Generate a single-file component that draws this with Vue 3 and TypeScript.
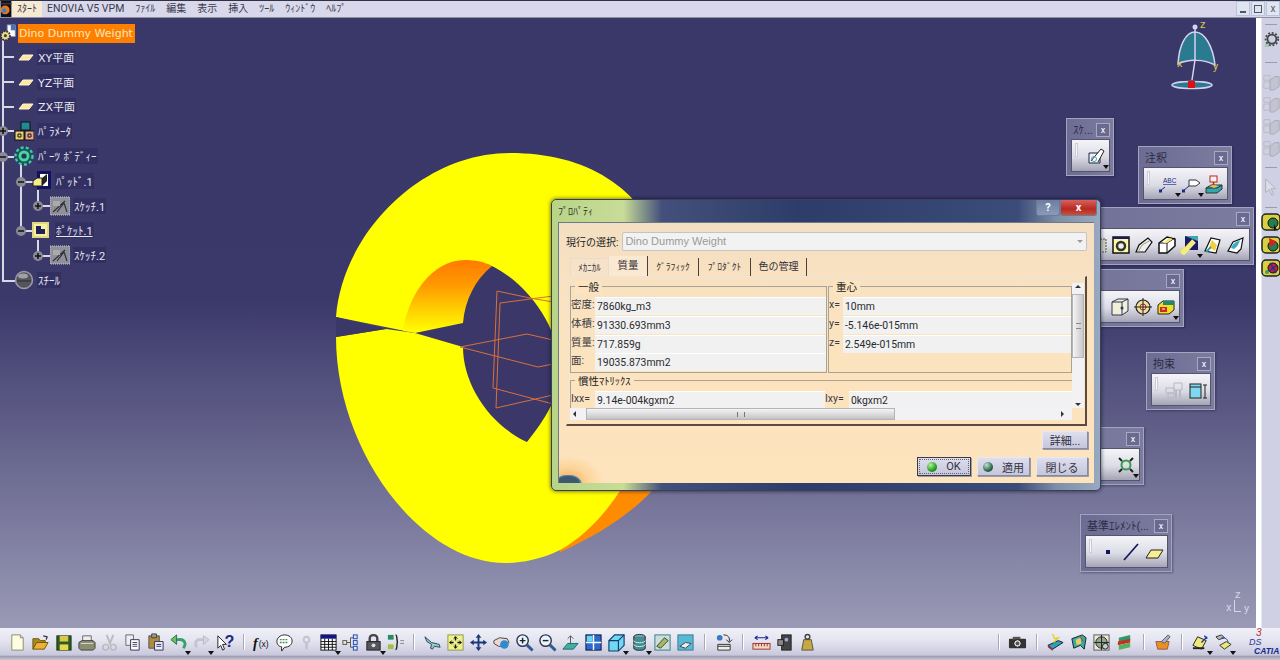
<script setup lang="ts">
const ic: Record<string, string> = {
  root: '<path d="M8 1h9v13H8z" fill="#fff" stroke="#88a"/><path d="M12 1h5v6h-5z" fill="#4a74b8"/><circle cx="6" cy="13" r="5" fill="#e8d890" stroke="#333" stroke-dasharray="2 1" stroke-width="2"/><circle cx="6" cy="13" r="1.6" fill="#333"/>',
  plane: '<path d="M5 13l4-5h10l-4 5z" fill="#ffe8a0" stroke="#fff6d8"/>',
  params: '<rect x="7" y="1" width="9" height="8" fill="#1d8a94" stroke="#111"/><rect x="1" y="10" width="9" height="9" fill="#e8d070" stroke="#111"/><rect x="11" y="10" width="9" height="9" fill="#e8a888" stroke="#111"/><path d="M4 13h3v3H4zM14 13h3v3h-3z" fill="none" stroke="#111"/>',
  gear: '<circle cx="10" cy="10" r="6.5" fill="#4fd0a0" stroke="#0d5c48" stroke-width="2"/><circle cx="10" cy="10" r="8.5" fill="none" stroke="#39c9b0" stroke-width="2.4" stroke-dasharray="3 2.2"/><circle cx="10" cy="10" r="2.6" fill="#1d3a5c"/>',
  pad: '<rect x="5" y="0" width="14" height="18" fill="#14105c"/><path d="M8 3h8v12H8z" fill="#fff"/><path d="M1 10l4-3h5v8H1z" fill="#f6ec90" stroke="#222"/><path d="M10 7l5-4v7l-5 5z" fill="#222"/>',
  pocket: '<rect x="1" y="3" width="15" height="14" fill="#f7f0a0" stroke="#e0d880" stroke-width="2"/><path d="M4 6h5v3h4v5H4z" fill="#22205c"/>',
  sketch: '<rect x="0" y="1" width="20" height="18" fill="#8e8e9c" stroke="#ccc" stroke-dasharray="1 1"/><path d="M3 16L15 5M7 16l7-9 3 9" fill="none" stroke="#333" stroke-width="1.2"/><path d="M3 5h7v5H3z" fill="#aaa"/>',
  steel: '<circle cx="10" cy="10" r="8.5" fill="#55555f" stroke="#9a9aa6" stroke-width="1.5"/><ellipse cx="9" cy="6" rx="5" ry="2.5" fill="#a0a0a8"/><path d="M3 11h14" stroke="#2a2a30"/>',

  new: '<path d="M4 2h9l3 3v13H4z" fill="#fffde0" stroke="#8a8a70"/><path d="M13 2v3h3" fill="#ddd" stroke="#8a8a70"/>',
  open: '<path d="M2 17V6h6l2 2h5v3" fill="#a88a20" stroke="#6a5510"/><path d="M2 17l4-7h12l-4 7z" fill="#f0b030" stroke="#6a5510"/><path d="M13 3l4 1-1 3" fill="none" stroke="#222" stroke-width="1.2"/>',
  save: '<rect x="3" y="3" width="15" height="15" fill="#2f5a22" stroke="#1b3a14"/><rect x="6" y="3" width="9" height="6" fill="#d8c850"/><rect x="6" y="12" width="9" height="6" fill="#e8d850"/>',
  print: '<path d="M6 3h9v6H6z" fill="#eee" stroke="#666"/><path d="M2 10l3-2h12l2 2v6l-2 2H4l-2-2z" fill="#8a8d70" stroke="#444"/><path d="M4 11h13" stroke="#ddd"/>',
  cut: '<path d="M7 2l4 10M14 2l-4 10" stroke="#bbb" stroke-width="2"/><circle cx="6" cy="15" r="3" fill="none" stroke="#b8b8c0" stroke-width="1.5"/><circle cx="14" cy="15" r="3" fill="none" stroke="#b8b8c0" stroke-width="1.5"/>',
  copy: '<path d="M3 2h8v11H3z" fill="#eee" stroke="#667"/><path d="M8 7h9v11H8z" fill="#fff" stroke="#335"/><path d="M10 10h5M10 12h5M10 14h5" stroke="#446"/>',
  paste: '<path d="M3 3h11v13H3z" fill="#b08a40" stroke="#554"/><path d="M6 1h5v4H6z" fill="#999" stroke="#444"/><path d="M9 9h9v9H9z" fill="#eef" stroke="#335"/><path d="M11 12h5M11 14h5" stroke="#335"/>',
  undo: '<path d="M15 16c4-5 1-10-5-9H6" fill="none" stroke="#35a070" stroke-width="3"/><path d="M8 2L2 7l6 5z" fill="#68c060" stroke="#2a7050"/>',
  redo: '<path d="M5 15c-3-5 0-9 5-8h4" fill="none" stroke="#c5c5d0" stroke-width="3"/><path d="M12 3l6 4-6 5z" fill="#d5d5e0" stroke="#b8b8c8"/>',
  what: '<path d="M3 3v13l3-3 2 5 2-1-2-5h4z" fill="#fff" stroke="#222"/><text x="10" y="15" font-size="17" font-weight="700" fill="#1b2a88" font-family="Liberation Sans">?</text>',
  fx: '<text x="0" y="16" font-size="15" font-family="Liberation Serif" font-style="italic" font-weight="700" fill="#111">f</text><text x="6" y="15" font-size="9" font-family="Liberation Sans" fill="#111">(x)</text>',
  bubble: '<path d="M10 2c5 0 8 3 8 6.5S15 15 10 15l-3 4v-4.500C3 14 2 11 2 8.500S5 2 10 2z" fill="#fff" stroke="#222"/><path d="M5 7h9M5 10h9" stroke="#4a8a50" stroke-dasharray="2 1" stroke-width="1.500"/>',
  faint: '<circle cx="10" cy="7" r="3" fill="none" stroke="#c4c4d0" stroke-width="2"/><path d="M10 10v7" stroke="#c4c4d0" stroke-width="3"/>',
  table: '<rect x="2" y="2" width="16" height="16" fill="#fff" stroke="#111"/><rect x="2" y="2" width="16" height="4" fill="#14148a"/><path d="M2 9h16M2 12h16M2 15h16M6 6v12M10 6v12M14 6v12" stroke="#111"/>',
  tree: '<path d="M5 10h5M10 5v10M10 5h3M10 15h3" stroke="#555" fill="none"/><rect x="2" y="8" width="4" height="4" fill="#f0e8c0" stroke="#555"/><rect x="13" y="2" width="4" height="4" fill="#d8e8ff" stroke="#2244aa"/><rect x="13" y="8" width="4" height="4" fill="#d8e8ff" stroke="#2244aa"/><rect x="13" y="14" width="4" height="4" fill="#d8e8ff" stroke="#2244aa"/>',
  lock: '<path d="M6 9V6c0-5 8-5 8 0v3" fill="none" stroke="#444" stroke-width="2.500"/><rect x="3" y="9" width="14" height="9" fill="#55555f" stroke="#222"/><circle cx="10" cy="13" r="2" fill="#ddd"/>',
  formula: '<rect x="2" y="2" width="6" height="5" fill="#2a8a60"/><rect x="2" y="12" width="6" height="5" fill="#a0c040"/><path d="M10 2c2 0 1 3 2 7.500-1 4.500 0 8-2 8" fill="none" stroke="#222" stroke-width="1.500"/><path d="M15 8h4M15 11h4" stroke="#888"/>',
  fly: '<path d="M2 4l7 6 8 2 1 3-6-1-2 3-2-1 1-4-5-3z" fill="#9fc8c0" stroke="#1f4a66"/>',
  fit: '<rect x="2" y="2" width="16" height="16" fill="#eef08a" stroke="#8a9a50"/><path d="M10 4v4M10 16v-4M4 10h4M16 10h-4" stroke="#111" stroke-width="1.500"/><path d="M8 6l2-2 2 2M8 14l2 2 2-2M6 8l-2 2 2 2M14 8l2 2-2 2" fill="none" stroke="#111"/>',
  pan: '<path d="M10 1l3 4h-2v4h4V7l4 3-4 3v-2h-4v4h2l-3 4-3-4h2v-4H5v2l-4-3 4-3v2h4V5H7z" fill="#1d3a78"/>',
  rot: '<path d="M2 8l6-3 8 1 2 4-5 4H7l-5-3z" fill="#f0d8d0" stroke="#444"/><circle cx="13" cy="12" r="4.500" fill="#2f8ad0"/>',
  zin: '<circle cx="8" cy="8" r="6" fill="#e8f6ff" stroke="#335" stroke-width="1.500"/><path d="M5 8h6M8 5v6" stroke="#222" stroke-width="1.500"/><path d="M12.500 12.500l6 6" stroke="#2a5a90" stroke-width="3"/>',
  zout: '<circle cx="8" cy="8" r="6" fill="#e8f6ff" stroke="#335" stroke-width="1.500"/><path d="M5 8h6" stroke="#222" stroke-width="1.500"/><path d="M12.500 12.500l6 6" stroke="#2a5a90" stroke-width="3"/>',
  normal: '<path d="M2 17l5-6h11l-5 6z" fill="#40b0a0" stroke="#1f6a70"/><path d="M10 12V3M7 6l3-3 3 3" fill="none" stroke="#555"/>',
  quad: '<rect x="2" y="2" width="16" height="16" fill="#2a6ad0" stroke="#113"/><path d="M2 10h16M10 2v16" stroke="#fff" stroke-width="1.500"/><path d="M3 3h6v6H3z" fill="#68d8f0"/>',
  cube: '<path d="M2 8l6-6h10v11l-6 6H2z" fill="#70d8f0" stroke="#113a70" stroke-width="1.200"/><path d="M2 8h10v11M12 8l6-6" fill="none" stroke="#113a70" stroke-width="1.200"/>',
  cyl: '<ellipse cx="10" cy="4" rx="6" ry="2.500" fill="#6ab0b0" stroke="#223"/><path d="M4 4v12c0 3 12 3 12 0V4" fill="#4a8a90" stroke="#223"/><path d="M4 8c0 3 12 3 12 0M4 12c0 3 12 3 12 0" fill="none" stroke="#bfe"/>',
  shade1: '<rect x="2" y="2" width="16" height="16" fill="#c8e0d8" stroke="#3a7a8a"/><path d="M4 14l8-9 4 3-8 8z" fill="#a8b860" stroke="#444"/>',
  shade2: '<rect x="2" y="2" width="16" height="16" fill="#58b8d8" stroke="#3a7a8a"/><path d="M4 14l6-4 6 1-6 5z" fill="#eee" stroke="#444"/>',
  swap: '<circle cx="6" cy="5" r="3" fill="#3a7ac0"/><path d="M10 2c5 0 7 3 6 7M13 7l3 3 3-3" fill="none" stroke="#222"/><path d="M4 12h13v6H4z" fill="#eee" stroke="#333"/><path d="M4 14h13" stroke="#333"/>',
  measure: '<path d="M3 5h14M3 5l3-2M3 5l3 2M17 5l-3-2M17 5l-3 2" fill="none" stroke="#1b2a88" stroke-width="1.200"/><rect x="1" y="11" width="18" height="6" fill="#f0d8c0" stroke="#a03030"/><path d="M4 11v3M7 11v3M10 11v3M13 11v3M16 11v3" stroke="#a03030"/>',
  inertia: '<rect x="7" y="2" width="10" height="16" fill="#444" stroke="#222"/><rect x="3" y="7" width="6" height="6" fill="#888" stroke="#222"/><circle cx="12" cy="7" r="2" fill="#9ad"/>',
  weight: '<path d="M6 7h8l2 11H4z" fill="#c8a840" stroke="#554"/><circle cx="10" cy="4" r="2.500" fill="none" stroke="#444" stroke-width="1.500"/>',
  camera: '<rect x="1" y="6" width="18" height="10" rx="1" fill="#333"/><rect x="5" y="4" width="8" height="3" fill="#555"/><circle cx="10" cy="11" r="4" fill="#ddd" stroke="#111"/><circle cx="10" cy="11" r="2" fill="#555"/>',
  ren1: '<path d="M2 13l11-5 5 2-11 7z" fill="#30a0b8" stroke="#123"/><path d="M2 13l5 4v2l-5-4z" fill="#c02030"/><path d="M7 1l2 5 4-1-5 5" fill="none" stroke="#e8d020" stroke-width="1.500"/>',
  ren2: '<path d="M3 6l11-4 4 3-2 12-4-4-7 3z" fill="#40a8a0" stroke="#123"/><path d="M7 7l5-2 1 6-5 2z" fill="#e8d060"/><path d="M12 4l3 5" stroke="#c03030"/>',
  ren3: '<rect x="2" y="2" width="16" height="16" fill="#efe8d0" stroke="#556"/><circle cx="10" cy="10" r="6" fill="#90a890" stroke="#222"/><path d="M10 2v16M2 10h16" stroke="#222"/><circle cx="14" cy="14" r="3" fill="#ccc" stroke="#222"/>',
  ren4: '<path d="M4 5l12-3v5L4 10z" fill="#2a9a70"/><path d="M3 9l13-3v4L3 13z" fill="#c83020"/><path d="M4 13l12-3v5L4 18z" fill="#5ab060"/>',
  bowl: '<path d="M3 9h14l-2 8H5z" fill="#e89020" stroke="#955"/><path d="M9 9l7-7 2 2-6 7z" fill="#a8b8c8" stroke="#556"/>',
  appl1: '<path d="M2 13l5-9 9 4-5 9z" fill="#f0e878" stroke="#222"/><path d="M11 10l6-6M14 3l3 3" stroke="#2040a0" stroke-width="1.500"/><path d="M2 16h12" stroke="#222" stroke-width="2"/>',
  appl2: '<path d="M6 13l7-4 5 3-7 5z" fill="#e8e870" stroke="#333"/><path d="M2 4l6-2 3 3-6 2z" fill="#bbb" stroke="#333"/><path d="M8 5c4 0 6 1 7 5" fill="none" stroke="#2040a0"/>',

  gearg: '<path d="M2 17L9 9l-1 9z" fill="#9ec8b8"/><circle cx="11" cy="9" r="5" fill="none" stroke="#444" stroke-width="2"/><circle cx="11" cy="9" r="7" fill="none" stroke="#444" stroke-width="2" stroke-dasharray="2 2"/>',
  gr: '<path d="M2 3h7v5H2zM2 10h7v7H2z" fill="none" stroke="#b8b8c4"/><path d="M9 8l5-4h5v11l-6 4H9z" fill="#c4c4d0" stroke="#a8a8b8"/>',
  cursor: '<path d="M4 1v15l4-3 3 6 2-1-3-6h5z" fill="#ddddea" stroke="#aaaabc"/>',
  mod1: '<rect x="1" y="2" width="18" height="16" rx="4" fill="#d8d040" stroke="#222" stroke-width="1.500"/><circle cx="12" cy="11" r="5" fill="#2a7a50" stroke="#111"/><path d="M13 12v7l2-2 2 3" fill="#111"/>',
  mod2: '<rect x="1" y="2" width="18" height="16" rx="4" fill="#d8d040" stroke="#222" stroke-width="1.500"/><circle cx="12" cy="11" r="5" fill="#2a7a50" stroke="#111"/><path d="M8 3l8 4-7 5z" fill="#d82020"/>',
  mod3: '<rect x="1" y="2" width="18" height="16" rx="4" fill="#d8d040" stroke="#222" stroke-width="1.500"/><circle cx="12" cy="10" r="5" fill="#c82030" stroke="#111"/><path d="M7 14l9-7M9 5l6 10" stroke="#2030a0" stroke-width="1.500"/><circle cx="6" cy="14" r="2" fill="#3aa060"/>',

  sk: '<path d="M3 7h11v10H3z" fill="#eef" stroke="#224"/><path d="M5 15L15 3l3 2-6 11" fill="#fff" stroke="#222"/><circle cx="8" cy="13" r="2.500" fill="none" stroke="#4aa"/>',
  abc: '<text x="5" y="9" font-size="6.500" font-family="Liberation Sans" fill="#1b2a88" text-decoration="underline">ABC</text><path d="M2 17l5-4" stroke="#1b2a88"/><rect x="1" y="15.500" width="3" height="3" fill="#1b2a88"/>',
  flag: '<path d="M8 6h7l4 3-4 3H8z" fill="#fff" stroke="#334"/><path d="M2 17l6-5" stroke="#1b2a88"/><rect x="1" y="15.500" width="3" height="3" fill="#1b2a88"/>',
  pin: '<path d="M2 14l5-3h11v4l-5 4H2z" fill="#2fa8b0" stroke="#333"/><path d="M2 14h11l5-3" fill="none" stroke="#333"/><rect x="6" y="2" width="7" height="6" fill="#fff0e8" stroke="#c02020"/><path d="M9.500 8v5" stroke="#c02020" stroke-width="1.500"/><path d="M5 12l5-1 5 1-5 2z" fill="#e8c840"/>',
  half: '<rect x="6" y="4" width="12" height="13" fill="#d0d0c0" stroke="#555" stroke-dasharray="2 1"/>',
  ring: '<rect x="2" y="2" width="16" height="16" fill="#fdf8a8" stroke="#111" stroke-width="1.500"/><rect x="2" y="2" width="16" height="2" fill="#1a1866"/><circle cx="10" cy="11" r="4" fill="#eee" stroke="#333" stroke-width="2.500"/>',
  sw1: '<path d="M2 17l3-7 9-7 4 4-7 10z" fill="#eee" stroke="#111" stroke-width="1.200"/><path d="M4 17l4-7 7-4" fill="none" stroke="#a8a070"/>',
  sw2: '<path d="M2 8l8-6 8 2v7l-8 7H2z" fill="#fff" stroke="#111" stroke-width="1.500"/><path d="M2 8h8v10M10 8l8-5" fill="none" stroke="#111"/><path d="M6 8l6-5 4 1-6 4z" fill="#f4e870"/>',
  sw3: '<path d="M2 18L13 5" stroke="#e8e070" stroke-width="6"/><rect x="5" y="1" width="13" height="14" fill="#1a1a66"/><path d="M5 1h13v5z" fill="#40a8b0"/><path d="M2 19l12-13" stroke="#f4ec80" stroke-width="5"/>',
  sw4: '<path d="M2 16L8 3l9 2-4 13z" fill="#fff" stroke="#111" stroke-width="1.200"/><path d="M6 12L9 5l5 5-2 6z" fill="#f0d040"/><path d="M3 17l5-5" stroke="#30a0a0" stroke-width="2"/>',
  sw5: '<path d="M2 16l5-9 10-4-2 11-4 4z" fill="#fff" stroke="#111" stroke-width="1.200"/><path d="M5 13c2-5 5-6 9-8-1 4-3 7-6 9z" fill="#38b0c0"/>',
  box3: '<path d="M2 5l6-3h10v12l-6 4H2z" fill="#f0f0d8" stroke="#335"/><path d="M2 5h10v13M12 5l6-3" fill="none" stroke="#335"/><circle cx="12" cy="11" r="1.500" fill="#335"/>',
  tgt: '<circle cx="10" cy="10" r="7" fill="#f0e0a0" stroke="#222" stroke-width="1.200"/><circle cx="10" cy="10" r="3" fill="none" stroke="#b03030"/><path d="M10 1v18M1 10h18" stroke="#222"/>',
  mold: '<path d="M2 8l5-4h11v9l-5 4H2z" fill="#f0e020" stroke="#222"/><path d="M7 4h11v4H7z" fill="#1f8a70"/><path d="M4 10h7v5H4z" fill="#d02820"/><path d="M6 12h3" stroke="#fff"/>',
  sel: '<circle cx="10" cy="10" r="4.500" fill="none" stroke="#3a9a50" stroke-width="2"/><path d="M3 3l3 3M17 3l-3 3M3 17l3-3M17 17l-3-3" stroke="#222" stroke-width="2"/>',
  f1: '<path d="M2 8h8v5H2zM4 13h6v5H4zM10 3h8v7h-8z" fill="none" stroke="#b8b8c4"/><path d="M12 10v8M16 10v8" stroke="#b8b8c4" stroke-width="2"/>',
  cybox: '<rect x="3" y="4" width="11" height="14" fill="#80d8f0" stroke="#222"/><path d="M3 7h11" stroke="#222"/><path d="M18 5v13M16 5h4M16 18h4" stroke="#222"/>',
  pt: '<rect x="8" y="8" width="4" height="4" fill="#14145c"/>',
  line: '<path d="M3 18L17 2" stroke="#14145c" stroke-width="1.600"/>',
  pl: '<path d="M2 16l5-8h12l-5 8z" fill="#f8f090" stroke="#222"/>',
}

const groups: string[][] = [
  ['new', 'open', 'save', 'print', 'cut', 'copy', 'paste', '!undo', '!redo', 'what'],
  ['fx', 'bubble', 'faint', '!table', 'tree', '!lock', 'formula'],
  ['fly', 'fit', 'pan', 'rot', 'zin', 'zout', 'normal', 'quad', '!cube', '!cyl', 'shade1', 'shade2'],
  ['swap'],
  ['measure', 'inertia', 'weight'],
]
const groupsRight: string[][] = [['camera'], ['ren1', 'ren2', 'ren3', 'ren4'], ['bowl'], ['!appl1', '!appl2']]

const tree = [
  { d: 1, i: 'plane', t: 'XY平面' },
  { d: 1, i: 'plane', t: 'YZ平面' },
  { d: 1, i: 'plane', t: 'ZX平面' },
  { d: 1, i: 'params', t: 'ﾊﾟﾗﾒｰﾀ' },
  { d: 1, i: 'gear', t: 'ﾊﾟｰﾂ ﾎﾞﾃﾞｨｰ' },
  { d: 2, i: 'pad', t: 'ﾊﾟｯﾄﾞ.1' },
  { d: 3, i: 'sketch', t: 'ｽｹｯﾁ.1' },
  { d: 2, i: 'pocket', t: 'ﾎﾟｹｯﾄ.1', u: true },
  { d: 3, i: 'sketch', t: 'ｽｹｯﾁ.2' },
  { d: 1, i: 'steel', t: 'ｽﾁｰﾙ' },
]

const floats = [
  { x: 1066, y: 118, w: 48, title: 'ｽｹ...', icons: ['!sk'] },
  { x: 1138, y: 146, w: 94, title: '注釈', icons: ['!abc', '!flag', 'pin'] },
  { x: 1000, y: 207, w: 254, title: '', icons: ['half', 'ring', 'sw1', 'sw2', '!sw3', 'sw4', 'sw5'] },
  { x: 1000, y: 269, w: 184, title: '', icons: ['box3', 'tgt', '!mold'] },
  { x: 1146, y: 352, w: 69, title: '拘束', icons: ['f1', 'cybox'] },
  { x: 1000, y: 427, w: 144, title: '', icons: ['!sel'] },
  { x: 1080, y: 514, w: 92, title: '基準ｴﾚﾒﾝﾄ(...', icons: ['pt', 'line', 'pl'] },
]

const left = [
  { k: '密度:', v: '7860kg_m3' },
  { k: '体積:', v: '91330.693mm3' },
  { k: '質量:', v: '717.859g' },
  { k: '面:', v: '19035.873mm2' },
]
const cog = [
  { k: 'x=', v: '10mm' },
  { k: 'y=', v: '-5.146e-015mm' },
  { k: 'z=', v: '2.549e-015mm' },
]
const tabs = ['ﾒｶﾆｶﾙ', '質量', 'ｸﾞﾗﾌｨｯｸ', 'ﾌﾟﾛﾀﾞｸﾄ', '色の管理']
const menu = ['ﾌｧｲﾙ', '編集', '表示', '挿入', 'ﾂｰﾙ', 'ｳｨﾝﾄﾞｳ', 'ﾍﾙﾌﾟ']
const name = (s: string) => s.replace('!', '')
const hasDrop = (s: string) => s.startsWith('!')
</script>

<template>
  <div class="app">
    <div class="menubar">
      <svg class="logo" viewBox="0 0 12 18"><rect width="12" height="18" fill="#111" /><circle cx="5" cy="10" r="5" fill="#e87820" /><circle cx="4" cy="11" r="2.500" fill="#3a80c8" /><path d="M0 2h12v2H0z" fill="#334" /></svg>
      <span class="start">ｽﾀｰﾄ</span>
      <nav class="menu">
        <span class="en">ENOVIA V5 VPM</span>
        <span v-for="m in menu" :key="m">{{ m }}</span>
      </nav>
      <div class="winbtns">
        <span><i class="b-min"></i></span>
        <span><i class="b-res"></i></span>
        <span class="x">x</span>
      </div>
    </div>

    <div class="middle">
      <div class="view">
        <svg class="part" viewBox="0 18 1256 610">
          <defs>
            <linearGradient id="inner" x1="0" y1="0" x2="0" y2="1">
              <stop offset="0" stop-color="#ff7a00" />
              <stop offset="0.35" stop-color="#ff9a00" />
              <stop offset="1" stop-color="#ffff00" />
            </linearGradient>
          </defs>
          <path d="M560 552C610 530 650 500 668 470L640 440 560 520z" fill="#ff8c00" />
          <path d="M336 317C342 235 420 153 510 153 590 153 650 190 670 270L660 400C640 470 605 525 560 550 540 560 520 563 505 563 420 563 336 450 336 337L386 329 415 333z" fill="#ffff00" />
          <path d="M403 331C408 295 432 260 465 260 475 260 485 262 492 266L463 330 415 332z" fill="url(#inner)" />
          <path d="M492 266C530 285 560 330 560 370 560 395 545 420 527 442 490 425 463 385 463 347L415 333 463 323C465 300 475 280 492 266z" fill="#3b3869" />
          <path d="M336 317L386 329 336 337z" fill="#3b3869" />
          <g fill="none" stroke="#d8703a" stroke-width="1">
            <path d="M497 291L530 298 553 302M500 303L553 296M497 291L493 388 553 404M500 303L496 408 553 395M460 347L527 334 553 340M460 347L538 367 553 364" />
          </g>
        </svg>

        <div class="tree">
          <svg class="lines" viewBox="0 18 140 280">
            <g stroke="#d8d8e4" stroke-width="2" fill="none">
              <path d="M3 40V281H15M3 57H14M3 82H14M3 107H14M3 131H14M3 157H14M21 165V231H33M21 182H33M38 190V206H50M38 240V256H50" />
            </g>
            <g v-for="e in [[3,131,1],[3,157,0],[21,182,0],[21,231,0],[38,206,1],[38,256,1]]" :key="e[1]">
              <circle :cx="e[0]" :cy="e[1]" r="5" fill="#8a8a96" />
              <path :d="`M${e[0] - 3} ${e[1]}h6` + (e[2] ? `M${e[0]} ${e[1] - 3}v6` : '')" stroke="#111" stroke-width="1.500" />
            </g>
          </svg>
          <div class="row d0">
            <svg class="ti" viewBox="0 0 20 20" v-html="ic.root"></svg>
            <span class="sel">Dino Dummy Weight</span>
          </div>
          <div v-for="r in tree" :key="r.t + r.d" class="row" :class="'d' + r.d">
            <svg class="ti" viewBox="0 0 20 20" v-html="ic[r.i]"></svg>
            <span class="lbl" :class="{ under: r.u }">{{ r.t }}</span>
          </div>
        </div>

        <svg class="compass" viewBox="0 -6 60 86">
          <path d="M8 44C9 25 16 12 25 12 35 12 43 27 45 45 34 39 18 39 8 44z" fill="#2a7a90" stroke="#d8d0f0" stroke-width="1.500" />
          <path d="M25 6V40L22 60" stroke="#d8d0f0" stroke-width="1.500" fill="none" />
          <circle cx="25" cy="7" r="2.500" fill="#d8d0f0" />
          <ellipse cx="22" cy="65" rx="20" ry="3.500" fill="#2a7a90" stroke="#d8d0f0" stroke-width="1.500" />
          <rect x="18" y="61" width="7" height="7" fill="#e01010" />
          <text x="30" y="8" class="ax">z</text>
          <text x="7" y="47" class="ax">x</text>
          <text x="43" y="50" class="ax">y</text>
        </svg>
        <div class="axes"><span class="az">z</span><span class="ax2">x</span><span class="ay">y</span><i class="al"></i></div>

        <div
          v-for="f in floats"
          :key="f.x + '-' + f.y"
          class="float"
          :style="{ left: f.x + 'px', top: f.y - 18 + 'px', width: f.w + 'px' }"
        >
          <div class="ft"><span class="ftt">{{ f.title }}</span><span class="close">x</span></div>
          <div class="fb">
            <i class="grip"></i>
            <span v-for="n in f.icons" :key="n" class="fi" :class="{ drop: hasDrop(n) }">
              <svg viewBox="0 0 20 20" v-html="ic[name(n)]"></svg>
            </span>
          </div>
        </div>

        <div class="dlg">
          <div class="dtitle">
            <span class="dname">ﾌﾟﾛﾊﾟﾃｨ</span>
            <div class="dbtns"><span class="help">?</span><span class="cls">x</span></div>
          </div>
          <div class="panel">
            <div class="selrow">
              <span>現行の選択:</span>
              <div class="combo">Dino Dummy Weight<i class="arrow"></i></div>
            </div>
            <div class="tabs">
              <span v-for="(t, i) in tabs" :key="t" class="tab" :class="['t' + i, { on: i === 1 }]">{{ t }}</span>
            </div>
            <div class="sheet">
              <div class="scrollarea">
                <div class="content">
                  <div class="groups">
                    <div class="grp g1">
                      <span class="lg">一般</span>
                      <div v-for="x in left" :key="x.k" class="kv k1"><span class="k">{{ x.k }}</span><span class="v">{{ x.v }}</span></div>
                    </div>
                    <div class="grp g2">
                      <span class="lg">重心</span>
                      <div v-for="x in cog" :key="x.k" class="kv k2"><span class="k">{{ x.k }}</span><span class="v">{{ x.v }}</span></div>
                    </div>
                  </div>
                  <div class="grp g3">
                    <span class="lg">慣性ﾏﾄﾘｯｸｽ</span>
                    <div class="kv k3">
                      <span class="k">Ixx=</span><span class="v">9.14e-004kgxm2</span>
                      <span class="k k4">Ixy=</span><span class="v">0kgxm2</span>
                    </div>
                  </div>
                </div>
                <div class="vbar">
                  <span class="tri up"></span>
                  <div class="vthumb"><i></i></div>
                  <span class="tri dn"></span>
                </div>
              </div>
              <div class="hbar">
                <span class="tri lf"></span>
                <div class="hthumb"><i></i></div>
                <span class="tri rt"></span>
              </div>
            </div>
            <div class="detail"><button class="btn">詳細...</button></div>
            <div class="actions">
              <button class="btn ok"><i class="dot green"></i>OK</button>
              <button class="btn ap"><i class="dot dark"></i>適用</button>
              <button class="btn cl">閉じる</button>
            </div>
            <div class="glow"></div>
          </div>
        </div>
      </div>

      <aside class="side">
        <i class="sep"></i>
        <svg viewBox="0 0 20 20" v-html="ic.gearg"></svg>
        <i class="sep wide first"></i>
        <svg class="g" viewBox="0 0 20 20" v-html="ic.gr"></svg>
        <svg class="g" viewBox="0 0 20 20" v-html="ic.gr"></svg>
        <svg class="g" viewBox="0 0 20 20" v-html="ic.gr"></svg>
        <svg class="g" viewBox="0 0 20 20" v-html="ic.gr"></svg>
        <i class="sep wide"></i>
        <svg viewBox="0 0 20 20" v-html="ic.cursor"></svg>
        <i class="sep last"></i>
        <svg class="m" viewBox="0 0 20 20" v-html="ic.mod1"></svg>
        <svg class="m" viewBox="0 0 20 20" v-html="ic.mod2"></svg>
        <svg class="m" viewBox="0 0 20 20" v-html="ic.mod3"></svg>
      </aside>
    </div>

    <div class="bottom">
      <template v-for="(g, gi) in groups" :key="gi">
        <i v-if="gi > 0" class="vsep"></i>
        <span v-for="n in g" :key="n" class="bi" :class="{ drop: hasDrop(n), tight: gi === 1 }">
          <svg viewBox="0 0 20 20" v-html="ic[name(n)]"></svg>
        </span>
      </template>
      <span class="spacer"></span>
      <template v-for="(g, gi) in groupsRight" :key="'r' + gi">
        <i class="vsep"></i>
        <span v-for="n in g" :key="n" class="bi" :class="{ drop: hasDrop(n) }">
          <svg viewBox="0 0 20 20" v-html="ic[name(n)]"></svg>
        </span>
      </template>
      <div class="catia">
        <span class="l3">3</span><span class="lds">DS</span><span class="lc">CATIA</span>
      </div>
    </div>
  </div>
</template>

<style>
html, body { margin: 0; overflow: hidden; }
</style>

<style scoped>
.app { width: 1280px; height: 660px; display: flex; flex-direction: column; overflow: hidden; font-family: Roboto, "Noto Sans CJK JP", sans-serif; font-size: 11px; color: #222; background: #d0d0e4; }

.menubar { height: 18px; flex: none; display: flex; align-items: center; background: #d8d8ea; border-top: 1px solid #30304a; border-bottom: 1px solid #8f8fa4; box-sizing: border-box; color: #3a3a4c; font-size: 10px; }
.logo { width: 12px; height: 16px; flex: none; }
.start { width: 30px; height: 16px; line-height: 16px; text-align: center; background: #f7ead2; }
.menu { display: flex; gap: 11px; margin-left: 5px; line-height: 16px; }
.en { font-size: 10.500px; }
.winbtns { margin-left: auto; display: flex; gap: 1px; height: 16px; }
.winbtns span { width: 14px; height: 15px; background: #dfe6f2; border: 1px solid #b8c4d8; box-sizing: border-box; display: flex; align-items: center; justify-content: center; color: #556; font-size: 10px; }
.b-min { width: 6px; height: 2px; background: #556; margin-top: 7px; }
.b-res { width: 6px; height: 6px; border: 1px solid #556; }

.middle { flex: 1; display: flex; min-height: 0; }
.view { position: relative; width: 1256px; background: linear-gradient(#3a3769 0, #3b386a 46%, #9a9ab6 100%); overflow: hidden; }
.part { position: absolute; left: 0; top: 0; width: 1256px; height: 610px; }

.tree { position: relative; padding-top: 3.500px; color: #e8e8ee; }
.lines { position: absolute; left: 0; top: 0; width: 140px; height: 280px; }
.row { position: relative; height: 24.800px; display: flex; align-items: center; }
.ti { width: 20px; height: 20px; flex: none; }
.d0 { height: 23px; padding-left: 0; gap: 0; }
.d0 .ti { width: 18px; height: 18px; }
.d1 { padding-left: 14px; gap: 3px; }
.d2 { padding-left: 32px; gap: 3px; }
.d3 { padding-left: 50px; gap: 3px; }
.sel { margin-left: 0; height: 19px; line-height: 19px; padding: 0 1px; width: 115px; background: #ff8000; color: #f8e8c0; font: 11px/19px "DejaVu Sans", sans-serif; white-space: nowrap; overflow: hidden; }
.lbl { background: rgba(45, 42, 95, 0.6); padding: 0 1px; white-space: nowrap; font-size: 11px; }
.d1 .lbl { font-family: "DejaVu Sans", "Noto Sans CJK JP", sans-serif; }
.under { text-decoration: underline; }

.compass { position: absolute; left: 1170px; top: -4px; width: 60px; height: 86px; }
.ax { fill: #d8c850; font: 11px Roboto, sans-serif; }
.axes { position: absolute; left: 1226px; top: 570px; width: 26px; height: 26px; color: #d4d4e4; font-size: 11px; }
.az, .ax2, .ay { position: absolute; }
.az { left: 9px; top: 0; }
.ax2 { left: 0; top: 13px; }
.ay { left: 18px; top: 14px; }
.al { position: absolute; left: 8px; top: 12px; width: 7px; height: 12px; border-left: 1px solid #d4d4e4; border-bottom: 1px solid #d4d4e4; box-sizing: border-box; }

.float { position: absolute; height: 58px; box-sizing: border-box; background: linear-gradient(90deg, #6c6c94, #7c7ca0); border: 1px solid #a4a4bc; box-shadow: 1px 1px 2px rgba(20, 20, 50, 0.4); padding: 3px 3px 3px 4px; display: flex; flex-direction: column; gap: 2px; color: #e4e4ee; }
.ft { display: flex; height: 15px; align-items: center; justify-content: space-between; flex: none; }
.ftt { padding-left: 2px; margin-top: -2px; white-space: nowrap; font-size: 11px; color: #2c2c44; }
.close { width: 14px; height: 14px; border: 1px solid #a8a8c0; background: #6a6a90; color: #fff; font-size: 9px; line-height: 12px; text-align: center; box-sizing: border-box; }
.fb { flex: 1; display: flex; justify-content: flex-end; align-items: center; gap: 3px; position: relative; border: 1px solid #54546c; background: linear-gradient(#f4f4f8, #dcdce6 55%, #a4a4b6); padding: 0 3px; }
.grip { position: absolute; left: 3px; top: 3px; width: 3px; height: 14px; background: #f8f8fc; border: 1px solid #ccccd8; box-sizing: border-box; }
.fi { width: 20px; height: 20px; flex: none; position: relative; }
.fi svg { width: 20px; height: 20px; display: block; }
.fi.drop::after, .bi.drop::after { content: ""; position: absolute; right: -3px; bottom: -3px; border: 3px solid transparent; border-top: 4px solid #111; border-bottom: 0; }

.dlg { position: absolute; left: 551px; top: 181px; width: 550px; height: 292px; box-sizing: border-box; padding: 0 6px 7px; display: flex; flex-direction: column; border-radius: 5px; border: 1px solid #39405c; background: linear-gradient(90deg, #b8d488 0, #c8dc98 13%, #44507c 20%, #2d3c68 45%, #3c4c78 85%, #7d8ea8 92%, #99a9bf 100%); box-shadow: 0 0 4px rgba(10, 10, 30, 0.7); }
.dtitle { height: 22px; flex: none; display: flex; justify-content: space-between; position: relative; }
.dname { font-size: 10px; color: #2c3428; line-height: 24px; padding-left: 0; }
.dbtns { display: flex; height: 16px; margin-right: -3px; }
.help, .cls { display: block; text-align: center; line-height: 15px; color: #fff; font-weight: 700; border-radius: 0 0 3px 3px; border: 1px solid #6a7a98; box-sizing: border-box; border-top: 0; }
.help { width: 24px; background: linear-gradient(#6c7ea0, #8a9ab8); }
.cls { width: 37px; background: linear-gradient(#d86060, #b82a20 60%, #c85040); }

.panel { position: relative; flex: 1; display: flex; flex-direction: column; background: linear-gradient(#f5dfc2, #fbe3bf 40%, #fee4bd); padding: 0 7px 0 7px; border: 1px solid #6a7a88; border-width: 1px 0 0 1px; overflow: hidden; }
.selrow { margin-top: 9px; height: 19px; display: flex; align-items: center; gap: 4px; font-size: 10px; }
.combo { flex: 1; height: 19px; line-height: 17px; box-sizing: border-box; padding-left: 2px; background: #f2f2f2; border: 1px solid #c4c4c4; border-radius: 2px; color: #9a9a9a; font: 11px/17px "Liberation Sans", sans-serif; position: relative; }
.arrow { position: absolute; right: 3px; top: 7px; border: 3px solid transparent; border-top: 3px solid #999; border-bottom: 0; }
.tabs { display: flex; height: 20px; margin-top: 5px; margin-left: 4px; align-items: flex-end; }
.tab { height: 18px; line-height: 18px; text-align: center; box-sizing: border-box; color: #33303a; font-size: 10px; border-right: 1px solid #4a4038; flex: none; }
.t0 { width: 39px; background: #f6e2c8; border: 1px solid #e8dccc; border-bottom: 0; font-size: 9px; }
.t1 { width: 39px; height: 20px; line-height: 20px; background: #fbe8d0; font-size: 10.500px; }
.t2 { width: 51px; font-size: 9.600px; }
.t3 { width: 52px; font-size: 9.600px; }
.t4 { width: 56px; font-size: 10px; }

.sheet { height: 150px; flex: none; box-sizing: border-box; border: 1px solid #f0e4d4; border-right: 2px solid #5a4a40; border-bottom: 2px solid #5a4a40; padding: 2px 2px 4px 3px; display: flex; flex-direction: column; }
.scrollarea { flex: 1; min-height: 0; display: flex; }
.content { width: 502px; overflow: hidden; flex: none; padding-top: 7px; box-sizing: border-box; }
.groups { display: grid; grid-template-columns: 257px 244px; gap: 1px; }
.grp { position: relative; border: 1px solid #a8a498; box-sizing: border-box; padding-top: 10px; }
.g1, .g2 { height: 87px; }
.g3 { margin-top: 7px; height: 40px; border-bottom: 0; border-right: 0; }
.lg { position: absolute; left: 4px; top: -6px; background: #fce4c0; padding: 0 3px; font-size: 10.500px; line-height: 13px; white-space: nowrap; }
.kv { display: grid; height: 18px; margin-bottom: 0.800px; align-items: stretch; }
.k1 { grid-template-columns: 24px 1fr; }
.k2 { grid-template-columns: 14px 1fr; }
.k3 { grid-template-columns: 24px 230px 24px 1fr; height: 16px; }
.k { font-size: 10.500px; white-space: nowrap; line-height: 16px; color: #3a3a44; }
.k4 { padding-left: 0; }
.v { background: #f1f1f1; border-top: 1px solid #fff; box-sizing: border-box; padding-left: 2px; line-height: 17px; font-size: 10.400px; color: #2a2a30; }
.vbar { flex: 1; width: 12px; margin-top: 4px; background: #f2f2f4; display: flex; flex-direction: column; align-items: center; position: relative; }
.vthumb { width: 12px; height: 64px; margin-top: 6px; background: linear-gradient(90deg, #f4f4f4, #c8c8cc); border: 1px solid #b4b4b8; box-sizing: border-box; display: flex; align-items: center; justify-content: center; }
.vthumb i { width: 5px; height: 4px; border-top: 1px solid #888; border-bottom: 1px solid #888; }
.hbar { height: 12px; width: 502px; flex: none; background: #f2f2f4; display: flex; align-items: center; position: relative; }
.hthumb { width: 309px; height: 12px; margin-left: 10px; background: linear-gradient(#f4f4f4, #c4c4c8); border: 1px solid #b4b4b8; box-sizing: border-box; display: flex; align-items: center; justify-content: center; }
.hthumb i { width: 6px; height: 5px; border-left: 1px solid #777; border-right: 1px solid #777; }
.tri { width: 0; height: 0; border: 3px solid transparent; flex: none; }
.up { border-bottom-color: #333; border-top: 0; margin-top: 2px; }
.dn { border-top-color: #333; border-bottom: 0; margin-top: auto; margin-bottom: 2px; }
.lf { border-right-color: #333; border-left: 0; margin-left: 3px; }
.rt { border-left-color: #333; border-right: 0; margin-left: auto; margin-right: 8px; }

.btn { font: 11px Roboto, "Noto Sans CJK JP", sans-serif; color: #33333f; height: 18px; padding: 0; box-sizing: border-box; border: 1px solid #e8e8f2; border-right-color: #8a8aa0; border-bottom-color: #8a8aa0; box-shadow: 1px 1px 0 #9a9aac; background: linear-gradient(#dedeee, #c6c6dc); display: inline-flex; align-items: center; justify-content: center; gap: 9px; }
.detail { display: flex; justify-content: flex-end; margin-top: 5px; margin-right: -1px; }
.detail .btn { width: 46px; }
.actions { display: flex; justify-content: flex-end; gap: 6px; margin-top: 8px; margin-right: -1px; }
.ok, .ap, .cl { height: 19px; }
.ok { width: 54px; border: 1px solid #3a3a48; outline: 1px dotted #666; outline-offset: -3px; }
.ap { width: 53px; }
.cl { width: 52px; }
.dot { width: 10px; height: 10px; border-radius: 50%; display: block; }
.green { background: radial-gradient(circle at 35% 30%, #b8f0a0, #20a020 60%, #0c5010); }
.dark { background: radial-gradient(circle at 35% 30%, #c8e0d0, #2a6a50 60%, #0c2a20); }
.glow { position: absolute; left: -1px; bottom: 0; width: 46px; height: 32px; background: radial-gradient(ellipse 18px 11px at 10px 32px, #3f5a70 0 60%, #6f9fc0 75%, transparent 76%), radial-gradient(ellipse 36px 28px at 10px 32px, #f0a850 0, rgba(252, 200, 130, 0.6) 55%, transparent 100%); }

.side { width: 24px; flex: none; box-sizing: border-box; background: linear-gradient(90deg, #fff 0, #fff 5px, #d0d0e4 6px); padding: 6px 0 0 6px; display: flex; flex-direction: column; align-items: center; }
.side svg { width: 18px; height: 18px; margin: 2.500px 0; flex: none; }
.side svg.g { margin: 2px 0; }
.side svg.m { width: 20px; height: 20px; margin: 1.500px 0; }
.sep { width: 12px; height: 1px; background: #9a9ab0; margin: 0 0 3.500px; flex: none; }
.sep.wide { margin: 8px 0; }
.sep.first { margin-top: 10px; }
.sep.last { margin: 8px 0 3px; }

.bottom { height: 32px; flex: none; box-sizing: border-box; display: flex; align-items: center; padding: 0 0 4px 6px; background: linear-gradient(#f0f0f8 0, #e4e4f0 40%, #c8c8dc 85%, #9c9cb0 88%, #c8c8d8 100%); }
.vsep { width: 2px; height: 16px; flex: none; background: #a8a8b8; border-right: 1px solid #fff; margin: 0 6.500px; box-sizing: border-box; }
.bi { width: 19px; height: 19px; margin: 0 2px; flex: none; position: relative; }
.bi.tight { margin: 0 1.600px; }
.bi svg { width: 19px; height: 19px; display: block; }
.spacer { flex: 1; }
.catia { position: relative; width: 32px; height: 28px; margin-left: 13px; flex: none; font-family: "Liberation Sans", sans-serif; font-style: italic; }
.l3 { position: absolute; left: 8px; top: 0; color: #c03030; font-size: 10px; line-height: 10px; }
.lds { position: absolute; left: 1px; top: 10px; color: #2a3a9a; font-size: 9px; line-height: 9px; }
.lc { position: absolute; left: 6px; top: 19px; color: #1b2a88; font-size: 8.500px; font-weight: 700; line-height: 9px; }
</style>
